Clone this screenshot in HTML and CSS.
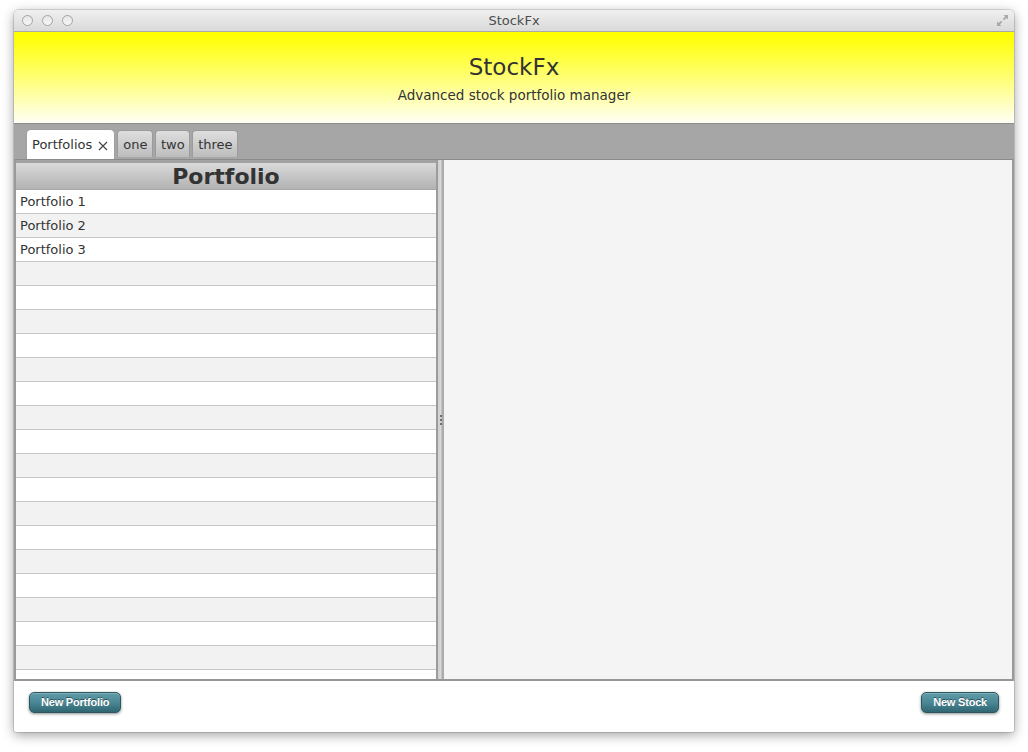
FILE: index.html
```html
<!DOCTYPE html>
<html>
<head>
<meta charset="utf-8">
<title>StockFx</title>
<link rel="stylesheet" href="styles.css">
</head>
<body>
<div class="window">
  <div class="titlebar">
    <div class="lights">
      <span class="light"></span><span class="light"></span><span class="light"></span>
    </div>
    <div class="wintitle">StockFx</div>
    <svg class="fullscreen" width="13" height="13" viewBox="0 0 13 13">
      <path d="M7.5 1 H12 V5.5 L10.4 3.9 L8 6.3 L6.7 5 L9.1 2.6 Z" fill="#a9a9a9"/>
      <path d="M5.5 12 H1 V7.5 L2.6 9.1 L5 6.7 L6.3 8 L3.9 10.4 Z" fill="#a9a9a9"/>
    </svg>
  </div>
  <div class="header">
    <div class="apptitle">StockFx</div>
    <div class="subtitle">Advanced stock portfolio manager</div>
  </div>
  <div class="tabbar">
    <div class="tab active">Portfolios
      <svg class="close" width="10" height="10" viewBox="0 0 10 10">
        <path d="M1 1 L9 9 M9 1 L1 9" stroke="#444" stroke-width="1.2" fill="none"/>
      </svg>
    </div>
    <div class="tab">one</div>
    <div class="tab">two</div>
    <div class="tab">three</div>
  </div>
  <div class="content">
    <div class="listpane">
      <div class="listhead">Portfolio</div>
      <div class="rows">
        <div class="row">Portfolio 1</div>
        <div class="row">Portfolio 2</div>
        <div class="row">Portfolio 3</div>
        <div class="row"></div><div class="row"></div><div class="row"></div>
        <div class="row"></div><div class="row"></div><div class="row"></div>
        <div class="row"></div><div class="row"></div><div class="row"></div>
        <div class="row"></div><div class="row"></div><div class="row"></div>
        <div class="row"></div><div class="row"></div><div class="row"></div>
        <div class="row"></div><div class="row"></div><div class="row"></div>
      </div>
    </div>
    <div class="splitter">
      <div class="grip"><span></span><span></span><span></span></div>
    </div>
    <div class="detail"></div>
  </div>
  <div class="footer">
    <button class="btn">New Portfolio</button>
    <button class="btn">New Stock</button>
  </div>
</div>
</body>
</html>
```

FILE: styles.css
```css
html, body {
  margin: 0;
  padding: 0;
  background: #ffffff;
}
body {
  width: 1028px;
  height: 752px;
  overflow: hidden;
  font-family: "DejaVu Sans", "Liberation Sans", sans-serif;
}
.window {
  margin-left: 14px;
  margin-top: 10px;
  width: 1000px;
  height: 722px;
  border-radius: 5px 5px 3px 3px;
  box-shadow: 0 3px 12px rgba(0,0,0,0.38), 0 0 0 1px rgba(0,0,0,0.12);
  display: flex;
  flex-direction: column;
  overflow: hidden;
  background: #fff;
}
.titlebar {
  height: 21px;
  flex: none;
  border-bottom: 1px solid #a9a9a9;
  background: linear-gradient(#f0f0f0, #d9d9d9);
  display: flex;
  align-items: center;
  position: relative;
}
.lights {
  display: flex;
  gap: 9px;
  padding-left: 8px;
}
.light {
  width: 9px;
  height: 9px;
  border-radius: 50%;
  border: 1px solid #a3a3a3;
  background: linear-gradient(#e6e6e6, #f6f6f6);
}
.wintitle {
  position: absolute;
  left: 0;
  right: 0;
  text-align: center;
  font-size: 13px;
  color: #4d4d4d;
  line-height: 21px;
}
.fullscreen {
  position: absolute;
  right: 5px;
  top: 4px;
}
.header {
  height: 91px;
  flex: none;
  background: linear-gradient(#ffff00 3%, #ffff80 55%, #fffff6 100%);
  display: flex;
  flex-direction: column;
  align-items: center;
  justify-content: center;
  gap: 6px;
  color: #333;
}
.apptitle {
  font-size: 23px;
  line-height: 28px;
}
.subtitle {
  font-size: 13.5px;
  line-height: 16px;
}
.tabbar {
  height: 35px;
  flex: none;
  background: #a6a6a6;
  border-top: 1px solid #8c8c8c;
  display: flex;
  align-items: flex-end;
  gap: 2px;
  padding-left: 12px;
}
.tab {
  height: 27px;
  box-sizing: border-box;
  padding: 1px 4.5px 0 5px;
  font-size: 13px;
  line-height: 26px;
  color: #333;
  border: 1px solid #9b9b9b;
  border-bottom: none;
  border-radius: 4px 4px 0 0;
  background: linear-gradient(#dedede, #bdbdbd);
  margin-bottom: 2px;
  display: flex;
  align-items: center;
  gap: 6px;
}
.tab.active {
  height: 30px;
  margin-bottom: 0;
  background: #ffffff;
  border-color: #a0a0a0;
  border-radius: 5px 5px 0 0;
  padding: 1px 6px 0 5px;
}
.close {
  display: block;
  margin-top: 1px;
}
.content {
  height: 522px;
  flex: none;
  box-sizing: border-box;
  border-top: 1px solid #8a8a8a;
  border-left: 2px solid #9a9a9a;
  border-right: 2px solid #9a9a9a;
  border-bottom: 2px solid #969696;
  background: #a2a2a2;
  display: flex;
}
.listpane {
  width: 420px;
  flex: none;
  display: flex;
  flex-direction: column;
  padding-top: 3px;
  box-sizing: border-box;
  overflow: hidden;
}
.listhead {
  height: 27px;
  flex: none;
  box-sizing: border-box;
  background: linear-gradient(#dadada, #b3b3b3);
  border-bottom: 1px solid #a8a8a8;
  text-align: center;
  font-weight: bold;
  font-size: 22px;
  line-height: 28px;
  color: #333;
}
.rows {
  flex: 1;
  overflow: hidden;
  background: #fff;
}
.row {
  height: 24px;
  box-sizing: border-box;
  border-bottom: 1px solid #c6c6c6;
  padding-left: 4px;
  font-size: 13px;
  line-height: 23px;
  color: #333;
  background: #ffffff;
}
.row:nth-child(even) {
  background: #f2f2f2;
}
.splitter {
  width: 8px;
  flex: none;
  background: linear-gradient(to right, #9c9c9c 0, #9c9c9c 2px, #cfcfcf 2px, #dadada 5px, #ababab 6px, #ababab 8px);
  display: flex;
  align-items: center;
  justify-content: center;
}
.grip {
  display: flex;
  flex-direction: column;
  gap: 2px;
  margin-left: 2px;
}
.grip span {
  width: 2px;
  height: 2px;
  background: #6e6e6e;
}
.detail {
  flex: 1;
  background: #f4f4f4;
}
.footer {
  flex: 1;
  background: #ffffff;
  display: flex;
  justify-content: space-between;
  align-items: flex-start;
  padding: 11px 15px 0 15px;
}
.btn {
  height: 21px;
  padding: 0 11px;
  border: 1px solid #2e5762;
  border-radius: 5px;
  background: linear-gradient(#609ca8, #4a8794 50%, #2f6672);
  box-shadow: 0 1px 3px rgba(0,0,0,0.45), inset 0 1px 0 rgba(255,255,255,0.2);
  color: #ffffff;
  font-family: "Liberation Sans", Arial, sans-serif;
  font-weight: bold;
  font-size: 11px;
  letter-spacing: -0.2px;
  text-shadow: 0 -1px 0 rgba(0,0,0,0.45);
  line-height: 19px;
}
```
